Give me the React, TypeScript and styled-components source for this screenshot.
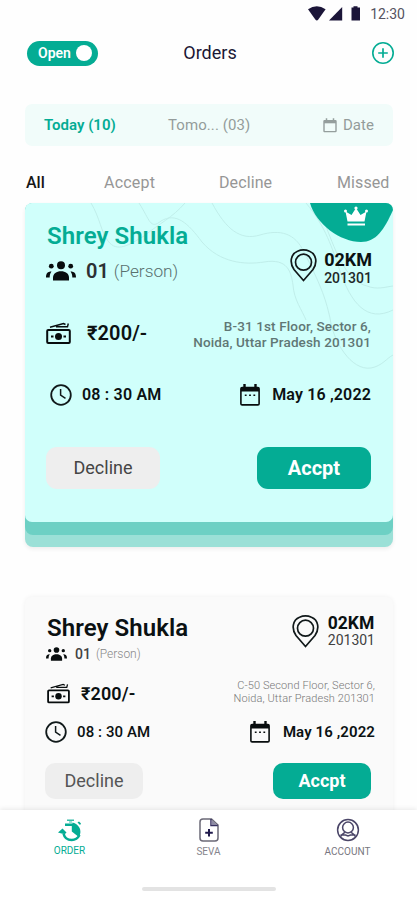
import React from 'react';
import styled, { createGlobalStyle } from 'styled-components';

const GREEN = '#04ac94';

const GlobalStyle = createGlobalStyle`
  * { box-sizing: border-box; }
  body { margin: 0; background: #fefefe; font-family: Roboto, "Noto Sans", sans-serif; }
  svg { display: block; flex: none; }
`;

const Screen = styled.div`
  display: flex;
  flex-direction: column;
  width: 417px;
  height: 900px;
  overflow: hidden;
  background: #fefefe;
`;

const StatusBar = styled.div`
  flex: none;
  display: flex;
  justify-content: flex-end;
  align-items: center;
  height: 27px;
  padding-right: 12px;
`;

const Label = styled.span<{
  $size: number;
  $weight?: number;
  $color?: string;
  $line?: number;
  $track?: number;
}>`
  font-size: ${(p) => p.$size}px;
  font-weight: ${(p) => p.$weight ?? 400};
  color: ${(p) => p.$color ?? '#0b1112'};
  line-height: ${(p) => p.$line ?? 20}px;
  letter-spacing: ${(p) => p.$track ?? 0}px;
  white-space: nowrap;
`;

const CustomerName = styled.h2<{ $color?: string }>`
  margin: 0 0 0 1px;
  font-size: 24px;
  font-weight: 600;
  line-height: 28px;
  letter-spacing: 0.08px;
  color: ${(p) => p.$color ?? '#0b1112'};
  white-space: nowrap;
`;

const Header = styled.header`
  flex: none;
  display: grid;
  grid-template-columns: 72px 1fr 74px;
  align-items: center;
  justify-items: center;
  height: 52px;
  padding: 0 22px 0 27px;
`;

const Toggle = styled.button`
  justify-self: start;
  display: flex;
  align-items: center;
  justify-content: space-between;
  width: 71px;
  height: 25px;
  padding: 0 6px 0 11px;
  border: 0;
  border-radius: 13px;
  background: ${GREEN};
  font-family: inherit;
`;

const Knob = styled.i`
  width: 16px;
  height: 16px;
  border-radius: 50%;
  background: #fff;
`;

const AddButton = styled.button`
  justify-self: end;
  padding: 0;
  border: 0;
  background: none;
`;

const Content = styled.main`
  flex: 1;
  min-height: 0;
  overflow: hidden;
  padding: 25px 24px 0 25px;
`;

const DateBar = styled.div`
  display: flex;
  align-items: center;
  height: 42px;
  padding: 0 19px;
  border-radius: 7px;
  background: #f1fcfa;
`;

const DateChoice = styled.div<{ $width?: number }>`
  display: flex;
  align-items: center;
  gap: 6px;
  width: ${(p) => (p.$width ? `${p.$width}px` : 'auto')};
`;

const Tabs = styled.nav`
  display: grid;
  grid-template-columns: 78px 115px 118px auto;
  padding-left: 1px;
  margin-top: 27px;
  height: 30px;
`;

const Stack = styled.section`
  width: 368px;
  border-radius: 8px;
  background: #9be0d7;
  padding-bottom: 12px;
  box-shadow: 0 2px 4px rgba(0, 0, 0, 0.07);
`;

const StackLayer = styled.div`
  padding-bottom: 13px;
  border-radius: 8px;
  background: #6dd0c4;
`;

const Card = styled.article<{ $featured?: boolean }>`
  position: relative;
  width: 368px;
  height: ${(p) => (p.$featured ? 319 : 240)}px;
  padding: ${(p) => (p.$featured ? '19px 22px 0 21px' : '17px 18px 0 20px')};
  margin-top: ${(p) => (p.$featured ? 0 : 50)}px;
  border-radius: 7px;
  overflow: hidden;
  background: ${(p) => (p.$featured ? '#d0fffb' : '#fafafa')};
  box-shadow: ${(p) => (p.$featured ? 'none' : '0 0 5px rgba(0, 0, 0, 0.06)')};
`;

const Contours = styled.svg`
  position: absolute;
  inset: 0;
`;

const Line = styled.div<{ $height: number; $indent?: number; $top?: boolean }>`
  position: relative;
  display: flex;
  justify-content: space-between;
  align-items: ${(p) => (p.$top ? 'flex-start' : 'center')};
  height: ${(p) => p.$height}px;
  padding-left: ${(p) => p.$indent ?? 0}px;
`;

const Group = styled.div<{ $gap?: number; $drop?: number; $end?: number }>`
  display: flex;
  align-items: center;
  gap: ${(p) => p.$gap ?? 0}px;
  margin-top: ${(p) => p.$drop ?? 0}px;
  margin-right: ${(p) => p.$end ?? 0}px;
`;

const Column = styled.div<{ $align?: string; $drop?: number }>`
  display: flex;
  flex-direction: column;
  align-items: ${(p) => p.$align ?? 'flex-start'};
  margin-top: ${(p) => p.$drop ?? 0}px;
`;

const Action = styled.button<{ $primary?: boolean; $large?: boolean }>`
  width: ${(p) => (p.$large ? 114 : 98)}px;
  height: ${(p) => (p.$large ? 42 : 36)}px;
  padding: 0;
  border: 0;
  border-radius: ${(p) => (p.$large ? 11 : 10)}px;
  background: ${(p) => (p.$primary ? GREEN : '#eeeeee')};
  font-family: inherit;
`;

const BottomNav = styled.footer`
  position: relative;
  flex: none;
  height: 90px;
  background: #fff;
  box-shadow: 0 -1px 5px rgba(0, 0, 0, 0.09);
`;

const NavItems = styled.div`
  display: grid;
  grid-template-columns: repeat(3, 139px);
  height: 77px;
`;

const NavItem = styled.div`
  display: flex;
  flex-direction: column;
  align-items: center;
  padding-top: 8px;
`;

const HomeBar = styled.div`
  width: 134px;
  height: 4px;
  margin: 0 auto;
  border-radius: 2px;
  background: #e3e3e3;
`;

const StatusIcons = () => (
  <svg width="62" height="16" viewBox="309 6 62 16" fill="#1b1538">
    <path d="M309 9.2Q317.800 3.400 326.600 9.200L319.300 19.600Q317.800 21.400 316.300 19.600Z" />
    <path d="M330 20.400L343.200 7V20.400Z" />
    <path d="M352.500 7.500h2V6.300h4v1.200h2.500v13h-8.500z" />
  </svg>
);

const People = ({ width }: { width: number }) => (
  <svg width={width} height={width * 0.667} viewBox="0 0 30 20" fill="#080d0e">
    <circle cx="15" cy="4.300" r="4" />
    <circle cx="5.300" cy="5.200" r="2.400" />
    <circle cx="24.700" cy="5.200" r="2.400" />
    <path d="M7 19.500V16.500C7 12.500 10.500 10.200 15 10.200S23 12.500 23 16.500V19.500Z" />
    <path d="M0 16.500C0 12.500 1.500 10.500 5.500 10.500C4 12.500 3.700 14.500 3.700 16.500Z" />
    <path d="M30 16.500C30 12.500 28.500 10.500 24.500 10.500C26 12.500 26.300 14.500 26.300 16.500Z" />
  </svg>
);

const Cash = ({ width }: { width: number }) => (
  <svg width={width} height={width * 0.9} viewBox="0 0 25 22.500" fill="none" stroke="#080d0e">
    <rect x="1.200" y="8" width="22.600" height="13" rx="1" strokeWidth="2" />
    <circle cx="12.500" cy="14.500" r="3.500" fill="#080d0e" stroke="none" />
    <path d="M5 14.500H7.500M17.500 14.500H20" strokeWidth="1.800" />
    <path d="M4 5.200L17.500 1.500L19.500 2.500M10 4.700H21.500L22.300 1.500" strokeWidth="1.400" />
  </svg>
);

const Pin = () => (
  <svg width="27" height="33" viewBox="0 0 27 33" fill="none" stroke="#11191a" strokeWidth="1.700">
    <path d="M13.500 31.500L4 20.500C-1 13 1 5 7.500 2.300Q13.500 -.4 19.500 2.300C26 5 28 13 23 20.500Z" />
    <circle cx="13.500" cy="13.200" r="8" />
  </svg>
);

const Clock = () => (
  <svg width="22" height="22" viewBox="0 0 22 22" fill="none" stroke="#10191a">
    <circle cx="11" cy="11" r="9.800" strokeWidth="1.800" />
    <path d="M10.600 5V11.200L15.500 14.400" strokeWidth="1.500" />
  </svg>
);

const Calendar = () => (
  <svg width="20" height="22" viewBox="0 0 20 22" fill="none" stroke="#080d0e">
    <rect x=".9" y="3.500" width="18.200" height="17.400" rx="1.200" strokeWidth="1.600" />
    <path d="M1 5.500H19" strokeWidth="4" />
    <path d="M4.500 0V5M15.500 0V5" strokeWidth="2.400" />
    <path d="M4.800 11.300H6.600M9.100 11.300H10.900M13.400 11.300H15.200" strokeWidth="1.500" />
  </svg>
);

const SmallCalendar = () => (
  <svg width="14" height="15" viewBox="0 0 14 15" fill="none" stroke="#959e9d">
    <rect x="1" y="2.600" width="12" height="11" rx=".6" strokeWidth="1.400" />
    <path d="M1 4H13" strokeWidth="2.600" />
    <path d="M3.500 .3V3M10.500 .3V3" strokeWidth="1.500" />
  </svg>
);

const PlusCircle = () => (
  <svg width="24" height="24" viewBox="0 0 24 24" fill="none" stroke={GREEN}>
    <circle cx="12" cy="12" r="10.200" strokeWidth="1.600" />
    <path d="M12 7.200V16.800M7.200 12H16.800" strokeWidth="1.700" />
  </svg>
);

const OrderIcon = () => (
  <svg width="26" height="25" viewBox="0 0 26 25" fill={GREEN}>
    <path d="M10 1.500H17V3H10Z" opacity=".8" />
    <path d="M12 3H15V5H12Z" opacity=".4" />
    <path d="M20.500 4.500L22 3.500L24 5.500L23 7Z" />
    <path d="M8 5.500H15.500V4.600A9.300 9.300 0 0 1 21.800 19L14.800 13.500V8H8Z" />
    <path d="M6.500 15.500C7.500 20 11 22 14.700 22S21 20 22.500 17" fill="none" stroke={GREEN} strokeWidth="2.500" />
    <path d="M1 14.500L5.500 10.500L9.500 14.500L8 16L4.500 15.500Z" />
  </svg>
);

const SevaIcon = () => (
  <svg width="20" height="24" viewBox="0 0 20 24" fill="none" stroke="#6b6977" strokeWidth="1.500">
    <path d="M4 1H12.500L19 7V20Q19 23 16 23H4Q1 23 1 20V4Q1 1 4 1Z" />
    <path d="M12 1V7.500H18.800" stroke="#373160" />
    <path d="M12.500 2L18 7H12.500Z" fill="#8d8aa4" stroke="none" />
    <path d="M10 11V18.600M6.200 14.800H13.800" stroke="#1f194b" strokeWidth="2" />
  </svg>
);

const AccountIcon = () => (
  <svg width="24" height="24" viewBox="0 0 24 24" fill="none" stroke="#4b4668" strokeWidth="1.500">
    <circle cx="12" cy="12" r="10.400" />
    <circle cx="12" cy="9.500" r="5.400" />
    <path d="M4.500 18.700C6 16 8 15 9 14.300M19.500 18.700C18 16 16 15 15 14.300M4.500 17H9.500L12 18L14.500 17H19.500" />
  </svg>
);

const CardDecoration = () => (
  <Contours width="368" height="319" viewBox="0 0 368 319" fill="none" stroke="#c0eeea" strokeWidth="1">
    <path d="M66 0C75 15 76 29 83 38C92 50 104 42 119 33C135 20 147 15 160 0" />
    <path d="M114 0C125 17 125 27 136 18C151 9 163 20 177 39C195 60 220 62 239 59C263 55 266 69 268 82C269 97 277 107 281 117" />
    <path d="M187 0C201 26 215 38 235 32C255 26 270 30 279 49C295 81 300 93 305 115C308 138 326 168 346 165C357 163 362 155 368 152" />
    <path d="M281 0C301 24 307 45 315 68C326 100 342 120 368 107" />
    <path d="M299 18C309 44 320 78 342 83C352 87 360 84 368 83" />
    <path d="M285 0H368V7C359 27 351 39 336 39C315 39 291 21 285 0Z" fill={GREEN} stroke="none" />
    <path d="M322.500 18.500L320.500 8.500L326.500 12L331 5L335.500 12L341.500 8.500L339.500 18.500Z" fill="#fff" stroke="none" />
    <path d="M322.500 21.500H340" stroke="#fff" strokeWidth="2.200" />
    <g fill="#fff" stroke="none"><circle cx="320.500" cy="8" r="1.500" /><circle cx="331" cy="5" r="1.600" /><circle cx="341.500" cy="8" r="1.500" /></g>
  </Contours>
);

const FeaturedOrder = () => (
  <Stack>
    <StackLayer>
      <Card $featured>
        <CardDecoration />
        <Line $height={79} $top>
          <Column>
            <CustomerName $color={GREEN}>Shrey Shukla</CustomerName>
            <Group $gap={10} $drop={7}>
              <People width={30} />
              <Group $gap={5}>
                <Label $size={20} $weight={600} $color="#2d3034" $line={28}>01</Label>
                <Label $size={17.300} $weight={300} $color="#59706e" $line={28}>(Person)</Label>
              </Group>
            </Group>
          </Column>
          <Group $gap={7} $drop={22} $end={-1}>
            <Pin />
            <Column $drop={7}>
              <Label $size={18} $weight={700} $line={18}>02KM</Label>
              <Label $size={14} $weight={500} $color="#1e2828" $line={18}>201301</Label>
            </Column>
          </Group>
        </Line>
        <Line $height={64}>
          <Group $gap={16}>
            <Cash width={25} />
            <Label $size={20} $weight={600} $track={0.1}>₹200/-</Label>
          </Group>
          <Column $align="flex-end" $drop={1}>
            <Label $size={13.500} $weight={500} $color="#607775" $line={16} $track={0.13}>B-31 1st Floor, Sector 6,</Label>
            <Label $size={13.500} $weight={500} $color="#607775" $line={16} $track={0.13}>Noida, Uttar Pradesh 201301</Label>
          </Column>
        </Line>
        <Line $height={59} $indent={4}>
          <Group $gap={10}>
            <Clock />
            <Label $size={16} $weight={600} $track={0.2}>08 : 30 AM</Label>
          </Group>
          <Group $gap={12}>
            <Calendar />
            <Label $size={16} $weight={600} $track={0.15}>May 16 ,2022</Label>
          </Group>
        </Line>
        <Line $height={87}>
          <Action $large><Label $size={18} $color="#454545">Decline</Label></Action>
          <Action $large $primary><Label $size={20} $weight={700} $color="#fff">Accpt</Label></Action>
        </Line>
      </Card>
    </StackLayer>
  </Stack>
);

const PlainOrder = () => (
  <Card>
    <Line $height={52} $indent={1} $top>
      <Column>
        <CustomerName>Shrey Shukla</CustomerName>
        <Group $gap={8} $drop={2}>
          <People width={21} />
          <Group $gap={5}>
            <Label $size={14} $weight={500} $color="#424242">01</Label>
            <Label $size={12} $weight={300} $color="#888">(Person)</Label>
          </Group>
        </Group>
      </Column>
      <Group $gap={9}>
        <Pin />
        <Column>
          <Label $size={17.500} $weight={700} $line={18}>02KM</Label>
          <Label $size={14} $color="#414141" $line={17}>201301</Label>
        </Column>
      </Group>
    </Line>
    <Line $height={50} $indent={2}>
      <Group $gap={11} $drop={5}>
        <Cash width={23} />
        <Label $size={18} $weight={600} $track={0.1}>₹200/-</Label>
      </Group>
      <Column $align="flex-end" $drop={1}>
        <Label $size={11} $weight={300} $color="#777" $line={13} $track={0.1}>C-50 Second Floor, Sector 6,</Label>
        <Label $size={11} $weight={300} $color="#777" $line={13} $track={0.1}>Noida, Uttar Pradesh 201301</Label>
      </Column>
    </Line>
    <Line $height={31}>
      <Group $gap={10}>
        <Clock />
        <Label $size={15} $weight={500} $track={0.1}>08 : 30 AM</Label>
      </Group>
      <Group $gap={13}>
        <Calendar />
        <Label $size={15} $weight={600} $track={0.1}>May 16 ,2022</Label>
      </Group>
    </Line>
    <Line $height={68}>
      <Action><Label $size={18} $color="#555">Decline</Label></Action>
      <Group $end={4}>
        <Action $primary><Label $size={18} $weight={700} $color="#fff">Accpt</Label></Action>
      </Group>
    </Line>
  </Card>
);

export default function App() {
  return (
    <>
      <GlobalStyle />
      <Screen>
        <StatusBar>
          <StatusIcons />
          <Label $size={14} $color="#555361">12:30</Label>
        </StatusBar>
        <Header>
          <Toggle>
            <Label $size={14} $weight={600} $color="#fff">Open</Label>
            <Knob />
          </Toggle>
          <Label $size={18} $color="#1b1735">Orders</Label>
          <AddButton aria-label="Add order"><PlusCircle /></AddButton>
        </Header>
        <Content>
          <DateBar>
            <DateChoice $width={124}>
              <Label $size={15} $weight={600} $color={GREEN}>Today (10)</Label>
            </DateChoice>
            <DateChoice $width={155}>
              <Label $size={15} $color="#949c9b" $track={0.08}>Tomo... (03)</Label>
            </DateChoice>
            <DateChoice>
              <SmallCalendar />
              <Label $size={15} $color="#949c9b">Date</Label>
            </DateChoice>
          </DateBar>
          <Tabs>
            <Label $size={16} $weight={500} $color="#171717">All</Label>
            <Label $size={16} $color="#969696" $track={0.2}>Accept</Label>
            <Label $size={16} $color="#969696" $track={0.1}>Decline</Label>
            <Label $size={16} $color="#969696" $track={0.1}>Missed</Label>
          </Tabs>
          <FeaturedOrder />
          <PlainOrder />
        </Content>
        <BottomNav>
          <NavItems>
            <NavItem>
              <OrderIcon />
              <Label $size={10} $color={GREEN} $line={16}>ORDER</Label>
            </NavItem>
            <NavItem>
              <SevaIcon />
              <Label $size={10} $color="#85848c" $line={20}>SEVA</Label>
            </NavItem>
            <NavItem>
              <AccountIcon />
              <Label $size={10} $color="#777680" $line={20}>ACCOUNT</Label>
            </NavItem>
          </NavItems>
          <HomeBar />
        </BottomNav>
      </Screen>
    </>
  );
}
